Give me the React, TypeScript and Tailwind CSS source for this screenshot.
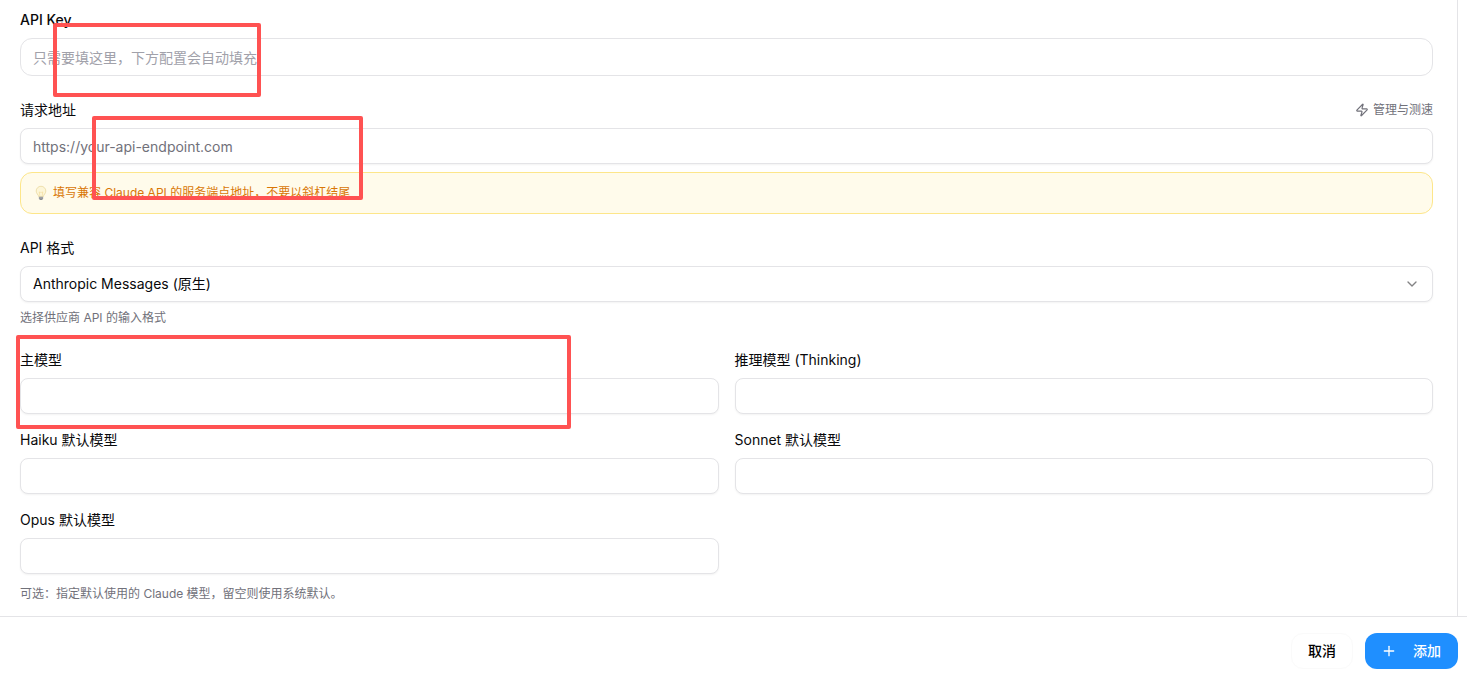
import React, { useState } from 'react';
import { ChevronDown, Plus, Zap } from 'lucide-react';

interface ModelField {
  id: string;
  label: string;
}

const MODEL_FIELDS: ModelField[] = [
  { id: 'main-model', label: '主模型' },
  { id: 'thinking-model', label: '推理模型 (Thinking)' },
  { id: 'haiku-model', label: 'Haiku 默认模型' },
  { id: 'sonnet-model', label: 'Sonnet 默认模型' },
  { id: 'opus-model', label: 'Opus 默认模型' },
];

const inputClass =
  'h-9 w-full rounded-lg border border-[#e4e4e7] bg-white px-3 text-sm text-[#09090b] shadow-xs outline-none placeholder:text-[#71717a] focus:border-[#1f8fff]';

const BulbIcon: React.FC = () => (
  <svg viewBox="0 0 16 20" className="h-4 w-3 shrink-0" aria-hidden="true">
    <path
      d="M8 1a6.4 6.4 0 0 0-6.4 6.4c0 3.4 2.9 4.6 3.4 7.6h6c.5-3 3.4-4.2 3.4-7.6A6.4 6.4 0 0 0 8 1Z"
      fill="#fdf6d8"
      stroke="#ecdca6"
      strokeWidth="1.2"
    />
    <path d="M6.5 14 5.6 8.500 7 9.500l1-1 1 1 1.400-1L9.500 14" fill="none" stroke="#efd48a" strokeWidth=".7" />
    <path d="M5.200 15h5.600v2.600L9.400 19.400H6.600L5.200 17.600Z" fill="#8d9094" />
    <path d="M5.200 16.500h5.600" stroke="#c3c6c9" strokeWidth=".7" />
  </svg>
);

const Label: React.FC<{ htmlFor: string; children: React.ReactNode }> = ({ htmlFor, children }) => (
  <label htmlFor={htmlFor} className="block text-sm text-[#09090b]">
    {children}
  </label>
);

const App: React.FC = () => {
  const [apiKey, setApiKey] = useState('');
  const [endpoint, setEndpoint] = useState('');
  const [apiFormat, setApiFormat] = useState('anthropic');
  const [models, setModels] = useState<Record<string, string>>({});

  return (
    <div
      lang="zh-CN"
      className="relative flex min-h-screen flex-col bg-white font-['Inter','Noto_Sans_CJK_SC',sans-serif] text-[#09090b]"
    >
      <main className="mr-[9px] flex-1 border-r border-[#e4e4e7] pt-[10px] pr-6 pb-[14px] pl-5">
        <form id="provider-form" className="flex flex-col gap-6" onSubmit={(e) => e.preventDefault()}>
          <div className="flex flex-col gap-2">
            <label htmlFor="api-key" className="block text-sm font-medium">
              API Key
            </label>
            <input
              id="api-key"
              type="text"
              value={apiKey}
              onChange={(e) => setApiKey(e.target.value)}
              placeholder="只需要填这里，下方配置会自动填充"
              className="h-[38px] w-full rounded-xl border border-[#e4e4e7] bg-white px-3 text-sm outline-none placeholder:text-[#a1a1aa] focus:border-[#1f8fff]"
            />
          </div>

          <div className="flex flex-col gap-2">
            <div className="flex items-center justify-between">
              <Label htmlFor="endpoint">请求地址</Label>
              <button type="button" className="flex items-center gap-1 text-xs text-[#71717a]">
                <Zap className="size-[14px]" />
                管理与测速
              </button>
            </div>
            <input
              id="endpoint"
              type="url"
              value={endpoint}
              onChange={(e) => setEndpoint(e.target.value)}
              placeholder="https://your-api-endpoint.com"
              className={inputClass}
            />
            <div className="rounded-xl border border-[#fde68a] bg-[#fffbeb] px-[14px] py-3">
              <p className="flex items-center gap-[6px] text-xs text-[#d97706]">
                <BulbIcon />
                填写兼容 Claude API 的服务端点地址，不要以斜杠结尾
              </p>
            </div>
          </div>

          <div className="flex flex-col gap-2">
            <Label htmlFor="api-format">API 格式</Label>
            <div className="relative">
              <select
                id="api-format"
                value={apiFormat}
                onChange={(e) => setApiFormat(e.target.value)}
                className={`appearance-none ${inputClass}`}
              >
                <option value="anthropic">Anthropic Messages (原生)</option>
              </select>
              <ChevronDown className="pointer-events-none absolute top-[10px] right-[13px] size-4 opacity-50" />
            </div>
            <p className="text-xs text-[#71717a]">选择供应商 API 的输入格式</p>
          </div>

          <div className="flex flex-col gap-3">
            <div className="grid grid-cols-2 gap-4">
              {MODEL_FIELDS.map((field) => (
                <div key={field.id} className="flex flex-col gap-2">
                  <Label htmlFor={field.id}>{field.label}</Label>
                  <input
                    id={field.id}
                    type="text"
                    value={models[field.id] ?? ''}
                    onChange={(e) => setModels({ ...models, [field.id]: e.target.value })}
                    className={inputClass}
                  />
                </div>
              ))}
            </div>
            <p className="text-xs text-[#71717a]">可选：指定默认使用的 Claude 模型，留空则使用系统默认。</p>
          </div>
        </form>
      </main>

      <footer className="flex justify-end gap-3 border-t border-[#e4e4e7] pt-4 pr-[9px] pb-3">
        <button
          type="button"
          className="h-9 rounded-xl border border-[#fafafa] bg-white px-4 text-sm font-medium text-black"
        >
          取消
        </button>
        <button
          type="submit"
          form="provider-form"
          className="flex h-9 min-w-[93px] items-center gap-4 rounded-xl bg-[#1f8fff] px-4 text-sm font-medium text-white"
        >
          <Plus className="size-4" strokeWidth={2} />
          添加
        </button>
      </footer>

      {/* Highlight frames over the fields to fill in */}
      <div className="pointer-events-none absolute top-[23px] left-[53px] h-[74px] w-[208px] rounded-xs border-4 border-[#ff5252]" />
      <div className="pointer-events-none absolute top-[116px] left-[92px] h-[84px] w-[271px] rounded-xs border-4 border-[#ff5252]" />
      <div className="pointer-events-none absolute top-[335px] left-[16px] h-[94px] w-[555px] rounded-xs border-4 border-[#ff5252]" />
    </div>
  );
};

export default App;
